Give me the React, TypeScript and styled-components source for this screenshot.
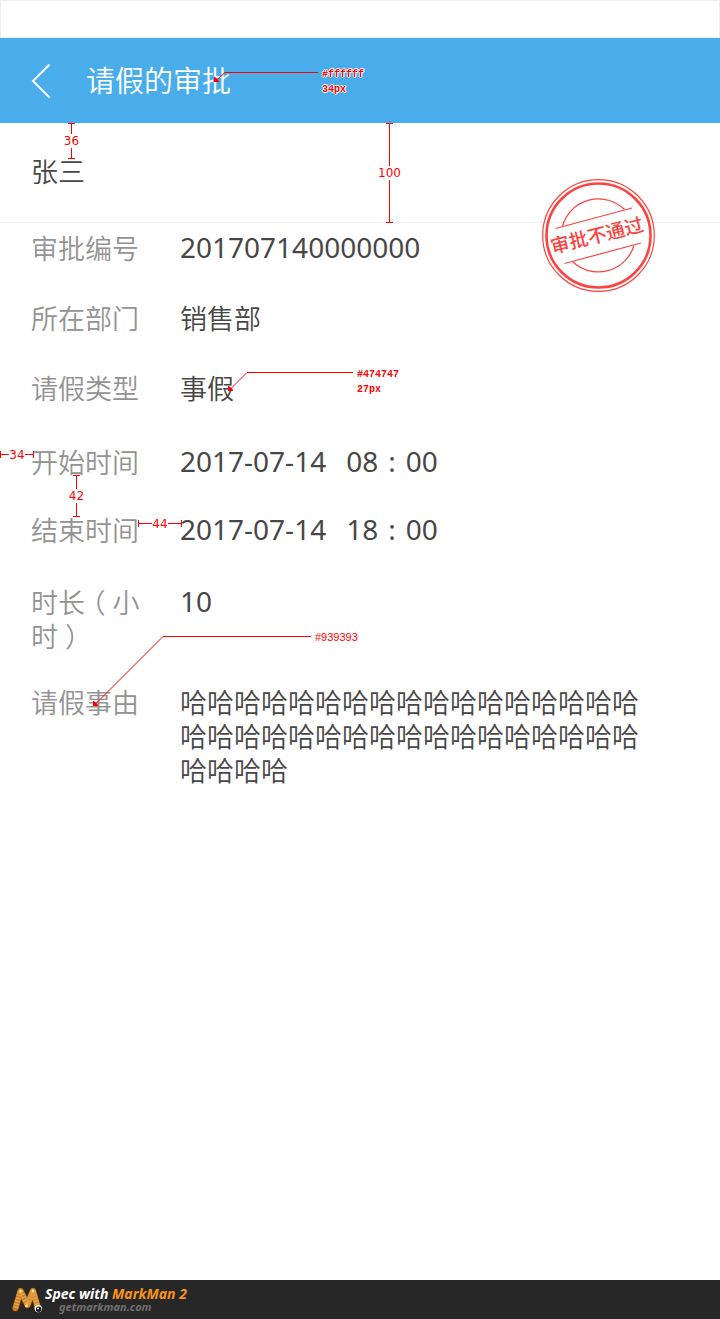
import React from "react";
import styled, { createGlobalStyle, css } from "styled-components";

const cjk = `"Noto Sans", "Noto Sans CJK SC", sans-serif`;
const red = "#ff0000";

const GlobalStyle = createGlobalStyle`
  *, *::before, *::after { box-sizing: border-box; }
  body { margin: 0; background: #fff; }
`;

const Page = styled.div`
  position: relative;
  display: flex;
  flex-direction: column;
  min-height: 100vh;
  font-family: ${cjk};
  font-weight: 350;
  color: #474747;
  background: #fff;
`;

const StatusBar = styled.div`
  height: 38px;
  border: 1px solid #eeeeee;
`;

const TitleBar = styled.header`
  display: flex;
  align-items: center;
  height: 85px;
  padding: 0 31px;
  gap: 34px;
  background: #49aceb;
  color: #fff;
`;

const BackButton = styled.button`
  display: flex;
  width: 21px;
  padding: 0;
  border: 0;
  background: none;
  color: inherit;
  cursor: pointer;
`;

const Title = styled.h1`
  margin: 0;
  font-size: 29px;
  line-height: 38px;
  font-weight: inherit;
`;

const Main = styled.main`
  flex: 1;
  position: relative;
`;

const Applicant = styled.h2`
  margin: 0;
  height: 100px;
  padding: 32px 31px 0;
  border-bottom: 1px solid #eeeeee;
  font-size: 27px;
  line-height: 34px;
  font-weight: inherit;
`;

const Details = styled.dl`
  margin: 0;
  padding: 9px 80px 40px 31px;
`;

const Row = styled.div<{ $gap: number }>`
  display: grid;
  grid-template-columns: 110px 1fr;
  column-gap: 39px;
  margin-bottom: ${(p) => p.$gap}px;
  font-size: 27px;
  line-height: 34px;
`;

const Label = styled.dt`
  color: #939393;
`;

const Paren = styled.span`
  margin: 0 7px;
  line-height: 24px;
  font-feature-settings: "halt";
`;

const Value = styled.dd<{ $numeric?: boolean }>`
  margin: 0;
  word-break: break-all;
  ${(p) => p.$numeric && css`font-size: 28px; line-height: 30px; font-weight: 400;`}
`;

const DateTime = styled.time`
  display: flex;
  gap: 20px;
`;

const Clock = styled.span`
  display: flex;
  gap: 10px;
`;

const StampBox = styled.div`
  position: absolute;
  top: 56px;
  right: 65px;
  width: 113px;
  height: 113px;
  svg { display: block; }
`;

const Footer = styled.footer`
  display: flex;
  align-items: center;
  gap: 1px;
  height: 39px;
  padding-left: 11px;
  background: #272727;
  font-family: "Noto Sans", "Open Sans", sans-serif;
  font-style: italic;
  font-weight: 700;
`;

const Brand = styled.div`
  display: flex;
  flex-direction: column;
  font-size: 14px;
  line-height: 14px;
  color: #fff;
`;

const Accent = styled.span`
  color: #f7931e;
`;

const Site = styled.a`
  padding-left: 14px;
  font-size: 11px;
  line-height: 12px;
  color: #707070;
  text-decoration: none;
`;

const Mark = styled.div<{ $x: number; $y: number }>`
  position: absolute;
  left: ${(p) => p.$x}px;
  top: ${(p) => p.$y}px;
  color: ${red};
  font-weight: 400;
`;

const Dimension = styled(Mark)<{ $length: number; $vertical?: boolean }>`
  display: flex;
  align-items: center;
  font-family: "DejaVu Sans", sans-serif;
  font-size: 12px;
  line-height: 14px;
  ${(p) =>
    p.$vertical
      ? css`flex-direction: column; height: ${p.$length}px; width: 31px;`
      : css`width: ${p.$length}px; height: 7px;`}
`;

const Arm = styled.i<{ $vertical?: boolean; $end?: boolean }>`
  flex: 1;
  ${(p) =>
    p.$vertical
      ? css`
          width: 7px;
          background: linear-gradient(${red}, ${red}) center / 1px 100% no-repeat;
          border-${p.$end ? "bottom" : "top"}: 1px solid ${red};
        `
      : css`
          height: 7px;
          background: linear-gradient(${red}, ${red}) center / 100% 1px no-repeat;
          border-${p.$end ? "right" : "left"}: 1px solid ${red};
        `}
`;

const Note = styled(Mark)<{ $plain?: boolean }>`
  font-family: ${(p) => (p.$plain ? `"Liberation Sans", sans-serif` : `"Liberation Mono", monospace`)};
  font-size: ${(p) => (p.$plain ? 11 : 10)}px;
  font-weight: ${(p) => (p.$plain ? 400 : 700)};
  line-height: 15px;
  text-shadow: 1px 0 #fff, -1px 0 #fff, 0 1px #fff, 0 -1px #fff;
`;

const Leader = styled(Mark)`
  svg { display: block; }
`;

function Measure(props: { x: number; y: number; length: number; vertical?: boolean; value: number }) {
  return (
    <Dimension $x={props.x} $y={props.y} $length={props.length} $vertical={props.vertical}>
      <Arm $vertical={props.vertical} />
      <span>{props.value}</span>
      <Arm $vertical={props.vertical} $end />
    </Dimension>
  );
}

function Pointer(props: { x: number; y: number; dx: number; dy: number; run: number }) {
  const { dx, dy, run } = props;
  return (
    <Leader $x={props.x} $y={props.y}>
      <svg width={dx + run + 4} height={dy + 6} fill="none" stroke={red} aria-hidden="true">
        <path d={`M2 ${dy + 0.5}L${dx + 2} .5H${dx + run + 2}`} />
        <path d={`M0 ${dy - 3}v5h5v-1l-4-4z`} fill={red} stroke="none" />
      </svg>
    </Leader>
  );
}

function Stamp() {
  return (
    <StampBox>
      <svg width="113" height="113" viewBox="0 0 113 113" fill="none" stroke="#fb4440">
        <circle cx="56.5" cy="56.5" r="55.8" strokeWidth="1.2" />
        <circle cx="56.5" cy="56.5" r="52" strokeWidth="2.6" />
        <path d="M20.5 47A37.3 37.3 0 0 1 82.5 30.5M30.5 82.5A37.3 37.3 0 0 0 92 66.5" strokeWidth="1.2" />
        <path d="M13.5 49.5L90 29M22.5 84.5L99 64" strokeWidth="1.2" />
        <text
          x="55"
          y="63"
          transform="rotate(-14 56.5 56.5)"
          textAnchor="middle"
          fill="#fb4440"
          stroke="none"
          fontFamily='"Noto Sans CJK SC", sans-serif'
          fontWeight="500"
          fontSize="19"
        >
          审批不通过
        </text>
      </svg>
    </StampBox>
  );
}

function MarkManLogo() {
  return (
    <svg width="33" height="30" viewBox="0 0 33 30" fill="none" strokeLinecap="round" aria-hidden="true">
      <path d="M4.5 23.5L9.5 6L16.5 20L22 6L27 24" stroke="#5c3104" strokeWidth="7" strokeLinejoin="round" />
      <path d="M4.5 23L9.5 6L16.5 19.5" stroke="#c47a22" strokeWidth="6" strokeLinejoin="round" />
      <path d="M16.5 19.5L22 6L27 23" stroke="#d08a2e" strokeWidth="6" strokeLinejoin="round" />
      <path d="M4.5 23L9.5 6L16.5 19.5L22 6L27 23" stroke="#e2a24a" strokeWidth="5" strokeDasharray="1.8 1.2" strokeLinecap="butt" />
      <circle cx="9.5" cy="6" r="1.4" fill="#ffe88a" />
      <circle cx="22" cy="6" r="1.4" fill="#ffe88a" />
      <circle cx="15.5" cy="21" r="1.4" fill="#ffe88a" />
      <circle cx="27.3" cy="23.6" r="3.7" fill="#fff" />
      <circle cx="27.6" cy="24.2" r="2.7" fill="#111" />
      <circle cx="27" cy="23.4" r="1" fill="#fff" />
    </svg>
  );
}

function When({ date, hour, minute }: { date: string; hour: string; minute: string }) {
  return (
    <DateTime>
      <span>{date}</span>
      <Clock>
        <span>{hour}</span>
        <span>:</span>
        <span>{minute}</span>
      </Clock>
    </DateTime>
  );
}

type Entry = { id: string; label: React.ReactNode; value: React.ReactNode; numeric?: boolean; gap: number };

const rows: Entry[] = [
  { id: "number", label: "审批编号", value: "201707140000000", numeric: true, gap: 36 },
  { id: "department", label: "所在部门", value: "销售部", gap: 36 },
  { id: "type", label: "请假类型", value: "事假", gap: 40 },
  { id: "start", label: "开始时间", value: <When date="2017-07-14" hour="08" minute="00" />, numeric: true, gap: 34 },
  { id: "end", label: "结束时间", value: <When date="2017-07-14" hour="18" minute="00" />, numeric: true, gap: 38 },
  {
    id: "duration",
    label: (
      <>
        时长<Paren>（</Paren>小时<Paren>）</Paren>
      </>
    ),
    value: "10",
    numeric: true,
    gap: 32,
  },
  { id: "reason", label: "请假事由", value: "哈".repeat(38), gap: 0 },
];

export default function App() {
  return (
    <>
      <GlobalStyle />
      <Page>
        <StatusBar />
        <TitleBar>
          <BackButton type="button" aria-label="返回">
            <svg width="21" height="36" viewBox="0 0 21 36" fill="none" stroke="currentColor" strokeWidth="2">
              <path d="M18.5 1.5L2 18L18.5 34.5" />
            </svg>
          </BackButton>
          <Title>请假的审批</Title>
        </TitleBar>
        <Main>
          <Applicant>张三</Applicant>
          <Details>
            {rows.map((row) => (
              <Row key={row.id} $gap={row.gap}>
                <Label>{row.label}</Label>
                <Value $numeric={row.numeric}>{row.value}</Value>
              </Row>
            ))}
          </Details>
          <Stamp />
        </Main>
        <Footer>
          <MarkManLogo />
          <Brand>
            <span>
              Spec with <Accent>MarkMan 2</Accent>
            </span>
            <Site href="#">getmarkman.com</Site>
          </Brand>
        </Footer>

        <Measure x={56} y={123} length={36} vertical value={36} />
        <Measure x={374} y={123} length={100} vertical value={100} />
        <Measure x={0} y={451} length={34} value={34} />
        <Measure x={61} y={475} length={42} vertical value={42} />
        <Measure x={138} y={520} length={44} value={44} />
        <Pointer x={214} y={72} dx={9} dy={8} run={93} />
        <Note $x={322} $y={67}>#ffffff<br />34px</Note>
        <Pointer x={228} y={372} dx={17} dy={17} run={106} />
        <Note $x={357} $y={367}>#474747<br />27px</Note>
        <Pointer x={93} y={636} dx={68} dy={68} run={148} />
        <Note $x={315} $y={630} $plain>#939393</Note>
      </Page>
    </>
  );
}
